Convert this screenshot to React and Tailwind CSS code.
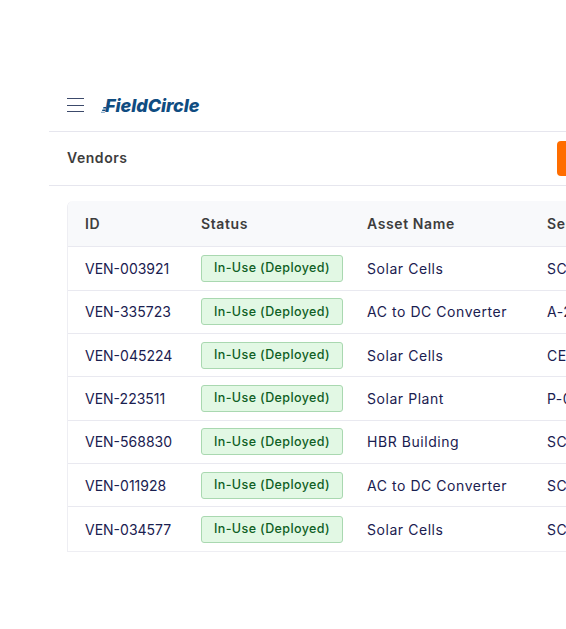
import React from 'react';

const rows = [
  ['VEN-003921', 'Solar Cells', 'SC-1040'],
  ['VEN-335723', 'AC to DC Converter', 'A-2291'],
  ['VEN-045224', 'Solar Cells', 'CE-3310'],
  ['VEN-223511', 'Solar Plant', 'P-0172'],
  ['VEN-568830', 'HBR Building', 'SC-7781'],
  ['VEN-011928', 'AC to DC Converter', 'SC-5120'],
  ['VEN-034577', 'Solar Cells', 'SC-6604'],
];

const Logo = () => (
  <div className="flex items-center">
    <svg width="5" height="14" viewBox="0 0 5 14" className="mr-[-1px]">
      <path d="M5 8H2.500L2 9.500H5z M4.500 10.500H1.500L1 12H4.500z" fill="#0f4c81" />
      <path d="M4 12.700H0L0 14H3.800z" fill="#8fb0cc" />
    </svg>
    <span className="text-[18px] leading-none font-extrabold italic text-[#0f4c81] tracking-[-0.05px]">FieldCircle</span>
  </div>
);

const App = () => {
  return (
    <div className="h-[629px] w-[566px] overflow-hidden bg-white pt-[84px] pl-[49px] font-['Inter','Liberation_Sans',sans-serif]">
      <div className="w-[700px]">
        {/* Top bar */}
        <div className="flex h-[48px] items-center gap-[17px] border-b border-[#e6e6ee] pb-[3px] pl-[18px]">
          <div className="mt-[-2px] flex w-[17px] flex-col gap-[5.500px]">
            <span className="h-[1px] bg-[#3c4a6b]"></span>
            <span className="h-[1px] bg-[#3c4a6b]"></span>
            <span className="h-[1px] bg-[#3c4a6b]"></span>
          </div>
          <Logo />
        </div>

        {/* Page title */}
        <div className="flex h-[54px] items-center justify-between border-b border-[#e6e6ee] pl-[18px]">
          <h1 className="mt-[-2px] text-[14px] font-semibold tracking-[0.55px] text-[#3d3d3d]">Vendors</h1>
          <button className="mr-[92px] h-[35px] w-[100px] rounded-[4px] bg-[#ff6d00]"></button>
        </div>

        {/* Table */}
        <div className="mt-[15px] ml-[18px] w-[633px] overflow-hidden rounded-tl-[6px] border-l border-b border-[#eeeef3]">
          <div className="grid h-[46.400px] grid-cols-[115px_166px_180px_172px] items-center border-b border-[#e9e9f0] bg-[#f8f9fb] text-[14px] font-semibold tracking-[0.6px] text-[#3d3d3d]">
            <div className="pl-[17px]">ID</div>
            <div className="pl-[18px]">Status</div>
            <div className="pl-[18px]">Asset Name</div>
            <div className="pl-[18px]">Serial No.</div>
          </div>
          {rows.map((r) => (
            <div
              key={r[0]}
              className="grid h-[43.350px] grid-cols-[115px_166px_180px_172px] items-center border-b border-[#e9e9f0] text-[14px] text-[#1a2050] last:border-b-0"
            >
              <div className="pl-[17px]">{r[0]}</div>
              <div className="pl-[18px]">
                <span className="flex h-[27px] w-[142px] items-center justify-center rounded-[3px] border border-[#a9d8b0] bg-[#e2f8e4] text-[12.500px] font-medium tracking-[0.4px] text-[#0f5f24]">
                  In-Use (Deployed)
                </span>
              </div>
              <div className="pl-[18px] tracking-[0.55px]">{r[1]}</div>
              <div className="pl-[18px] tracking-[0.55px]">{r[2]}</div>
            </div>
          ))}
        </div>
      </div>
    </div>
  );
};

export default App;
